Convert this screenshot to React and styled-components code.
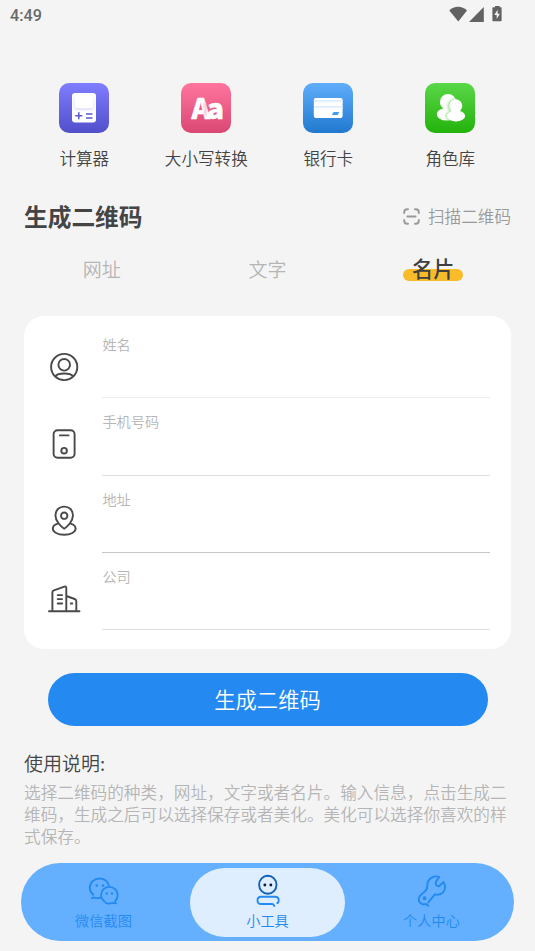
import React from "react";
import styled, { createGlobalStyle, css } from "styled-components";

const Global = createGlobalStyle`
  * { box-sizing: border-box; }
  body { margin: 0; background: #f4f4f4; font-family: "Noto Sans CJK SC", "Noto Sans", sans-serif; font-weight: 350; }
`;

const Screen = styled.main`
  width: 535px;
  height: 951px;
  overflow: hidden;
  background: #f4f4f4;
  color: #444;
  display: flex;
  flex-direction: column;
`;

const StatusBar = styled.header`
  height: 30px;
  flex: none;
  display: flex;
  justify-content: space-between;
  padding: 0 32px 0 10px;
  font: 500 16.2px/31px Roboto, sans-serif;
  color: #6a6a6a;
  svg { display: block; }
`;

const Tools = styled.nav`
  margin-top: 53px;
  padding-left: 23.3px;
  height: 94px;
  flex: none;
  display: grid;
  grid-template-columns: repeat(4, 122px);
`;

const Tool = styled.div`
  display: flex;
  flex-direction: column;
  align-items: center;
  gap: 13px;
  font-size: 16.6px;
  line-height: 24px;
  white-space: nowrap;
  svg { display: block; flex: none; }
`;

const TitleRow = styled.div`
  height: 40px;
  margin-top: 19px;
  padding: 0 24px;
  flex: none;
  display: flex;
  justify-content: space-between;
  align-items: center;
`;

const Title = styled.h1`
  margin: 0;
  font-size: 23.7px;
  line-height: 37px;
  font-weight: 700;
`;

const Scan = styled.div`
  display: flex;
  align-items: center;
  gap: 8px;
  font-size: 16.6px;
  line-height: 24px;
  color: #999;
`;

const Tabs = styled.div`
  height: 46px;
  margin-top: 10px;
  padding: 0 19px;
  flex: none;
  display: grid;
  grid-template-columns: repeat(3, 1fr);
`;

const Tab = styled.div`
  display: flex;
  justify-content: center;
  font-size: 19px;
  line-height: 45px;
  color: #b5b5b5;
  ${({ $active }) => $active && css`
    font-size: 21.2px;
    line-height: 44px;
    font-weight: 500;
    color: #3f3f3f;
  `}
`;

const Marked = styled.span`
  height: 46px;
  padding: 0 9px;
  position: relative;
  z-index: 0;
  &::before {
    content: "";
    position: absolute;
    z-index: -1;
    left: 0;
    right: 0;
    top: 23px;
    height: 12px;
    border-radius: 6px;
    background: #f8bc2b;
  }
`;

const Card = styled.section`
  margin: 24px 24px 0;
  height: 333px;
  flex: none;
  padding: 5px 21px 0 20px;
  border-radius: 20px;
  background: #fff;
`;

const Field = styled.label`
  height: 77.33px;
  display: grid;
  grid-template-columns: 40px 388px;
  column-gap: 18px;
  svg { margin-top: 25.6px; justify-self: center; }
`;

const Input = styled.div`
  height: 77.33px;
  padding: 13px 0 0 0.4px;
  border-bottom: 1px solid ${({ $line }) => $line};
  font-size: 14.2px;
  line-height: 21px;
  color: #b5b5b5;
`;

const Submit = styled.button`
  width: 440px;
  height: 53px;
  margin: 24px auto 0;
  flex: none;
  padding: 0 0 2px;
  border: 0;
  border-radius: 27px;
  background: #2489f0;
  color: #fff;
  font: 350 21.3px/51px "Noto Sans CJK SC", sans-serif;
`;

const Guide = styled.section`
  margin-top: 22px;
  padding: 0 24px;
  height: 97px;
  flex: none;
`;

const GuideTitle = styled.h2`
  margin: 0 0 4px;
  font-size: 19px;
  line-height: 29px;
  font-weight: inherit;
`;

const GuideText = styled.p`
  width: 490px;
  margin: 0;
  font-size: 16.65px;
  line-height: 22px;
  color: #b5b5b5;
  white-space: nowrap;
`;

const BottomBar = styled.nav`
  width: 493px;
  height: 78px;
  margin: 18px 0 0 21px;
  flex: none;
  padding: 5px 4px 4px 5px;
  border-radius: 39px;
  background: #64b0ff;
  display: grid;
  grid-template-columns: repeat(3, 155px);
  column-gap: 9px;
`;

const NavItem = styled.div`
  height: 69px;
  padding-top: 6px;
  border-radius: 35px;
  display: flex;
  flex-direction: column;
  align-items: center;
  background: ${({ $active }) => ($active ? "#deeeff" : "transparent")};
  color: #2489f0;
  font-size: 14.2px;
  line-height: 21px;
  svg { display: block; margin-bottom: 1px; }
`;

const StatusIcons = () => (
  <svg width="54" height="30" viewBox="0 0 54 30" fill="#626262">
    <path d="M0.3 10.4C5 5.5 13 5.5 18 10.4L9.3 21.5Z" />
    <path d="M34.8 7v15H20Z" />
    <path d="M46 6h4.6v1.3h1.2q.8 0 .8.8v12.3q0 .8-.8.8h-7.6q-.8 0-.8-.8V8.1q0-.8.8-.8H46Z" />
    <path d="M48.6 9.7 45.3 15h2.4v4l3.2-5.2h-2.3Z" fill="#f4f4f4" />
  </svg>
);

const tileColors = {
  calc: ["#807dff", "#514fca"],
  text: ["#ff759e", "#d94872"],
  bank: ["#60adfb", "#2179ce"],
  role: ["#5ad748", "#23b20b"],
};

const Tile = ({ kind, children }) => (
  <svg width="50" height="50" viewBox="0 0 50 50">
    <defs>
      <linearGradient id={kind} x2="0" y2="1">
        <stop stopColor={tileColors[kind][0]} />
        <stop offset="1" stopColor={tileColors[kind][1]} />
      </linearGradient>
      <filter id={`${kind}Soft`} x="-50%" y="-50%" width="200%" height="200%"><feGaussianBlur stdDeviation="1" /></filter>
    </defs>
    <rect width="50" height="50" rx="10" fill={`url(#${kind})`} />
    {children}
  </svg>
);

const CalcIcon = () => (
  <Tile kind="calc">
    <rect x="13" y="10" width="24" height="29.5" rx="3" fill="#fff" />
    <rect x="15.5" y="13.5" width="19" height="13.3" rx="2.5" fill="#aaa8f4" filter="url(#calcSoft)" opacity=".45" />
    <rect x="15.8" y="12" width="18.6" height="13.3" rx="2.5" fill="#fff" />
    <path d="M16.3 32.7h7M19.8 29.2v7M27 31h6.5M27 35h6.5" stroke="#5c59d4" strokeWidth="1.5" />
  </Tile>
);

const GlyphText = styled.text`
  font: 900 28px "Noto Sans CJK SC", sans-serif;
  letter-spacing: -3.2px;
  fill: #fff;
  stroke: #fff;
  stroke-width: 0.5px;
`;

const CaseIcon = () => (
  <Tile kind="text">
    <GlyphText x="10.4" y="35.6">Aa</GlyphText>
    <path d="m23.4 20 1.3 5.5-.6 7" fill="none" stroke="#f7a9c2" strokeWidth="1.8" filter="url(#textSoft)" />
  </Tile>
);

const BankIcon = () => (
  <Tile kind="bank">
    <defs><linearGradient id="stripe" x2="0" y2="1"><stop stopColor="#d3e8fd" /><stop offset="1" stopColor="#fff" /></linearGradient></defs>
    <rect x="10.8" y="15" width="28.8" height="20" rx="2" fill="#fff" />
    <rect x="11" y="17" width="28.5" height="3" fill="url(#stripe)" />
    <rect x="11" y="23" width="28.5" height="3" fill="url(#stripe)" />
    <path d="M31 29h5.3l-1.6 3H29q.5-2.5 2-3" fill="#469bea" />
  </Tile>
);

const RoleIcon = () => (
  <Tile kind="role">
    <defs>
      <clipPath id="backPerson">
        <circle cx="23" cy="19" r="8" />
        <path d="M17.5 23H29v12H15q5-5 2.5-12" />
        <ellipse cx="21.5" cy="31.3" rx="9.7" ry="6.3" />
      </clipPath>
    </defs>
    <g clipPath="url(#backPerson)">
      <rect x="10" y="10" width="26" height="30" fill="#fff" />
      <circle cx="30" cy="23" r="7.6" fill="#a9e4a0" filter="url(#roleSoft)" />
      <ellipse cx="30" cy="33" rx="9.4" ry="6.2" fill="#a9e4a0" filter="url(#roleSoft)" />
    </g>
    <circle cx="30.8" cy="22.8" r="6.5" fill="#fff" />
    <path d="M27.5 26h6.8v5h-7.2z" fill="#fff" />
    <ellipse cx="31" cy="32.9" rx="9.1" ry="5.6" fill="#fff" />
  </Tile>
);

const ScanIcon = () => (
  <svg width="17" height="17" viewBox="0 0 17 17" fill="none" stroke="#999" strokeWidth="1.9" strokeLinecap="round">
    <path d="M1.2 5v-.8q0-3 3-3H5M12 1.2h.8q3 0 3 3V5M15.8 12v.8q0 3-3 3H12M5 15.8h-.8q-3 0-3-3V12M4.4 8.5h8.2" />
  </svg>
);

const LineIcon = ({ children }) => (
  <svg width="40" height="40" viewBox="0 0 40 40" fill="none" stroke="#494949" strokeWidth="1.9" strokeLinecap="round" strokeLinejoin="round">{children}</svg>
);

const fields = [
  ["姓名", "#eee", <><circle cx="20.2" cy="20" r="13.1" /><circle cx="20.2" cy="17.8" r="5.8" /><path d="M11.7 29q1.5-2.5 8.5-2.5t8.5 2.5" /></>],
  ["手机号码", "#ddd", <><rect x="9.6" y="6.3" width="21" height="27.4" rx="4" /><path d="M15.9 11.4h8.6" /><circle cx="20.1" cy="26.7" r="2.8" /></>],
  ["地址", "#c6c6c6", <g transform="translate(.2 -.5)"><path d="M20 28.2c-3-1.8-8.8-7.5-8.8-13.4C11.2 9.5 15 6.1 20 6.1s8.8 3.4 8.8 8.7c0 5.9-5.8 11.6-8.8 13.4Z" /><circle cx="20" cy="15.2" r="3.2" /><path d="M13.6 23.1c-3 .8-5 2.6-5 5 0 3.5 4.8 6.1 11.4 6.1s11.4-2.6 11.4-6.1c0-2.4-2-4.2-5-5" /></g>],
  ["公司", "#ddd", <g transform="translate(.2 -.7)"><path d="M4.8 33h30.5M8.2 33V14q0-1.5 1.5-2l10.4-3.6q2-.7 2 1.3V33M22.1 17.7l8.4 3q1.6.6 1.6 2.2V33M13.5 16.8h4.4M13.5 20.8h4.4M13.5 25.2h4.4M26.6 25.2h1.5" /></g>],
];

const NavIcon = ({ children }) => (
  <svg width="36" height="35" viewBox="0 0 36 35" fill="none" stroke="#2489f0" strokeWidth="1.9" strokeLinecap="round" strokeLinejoin="round">{children}</svg>
);

export default function App() {
  return (
    <>
      <Global />
      <Screen>
        <StatusBar><span>4:49</span><StatusIcons /></StatusBar>
        <Tools>
          <Tool><CalcIcon />计算器</Tool>
          <Tool><CaseIcon />大小写转换</Tool>
          <Tool><BankIcon />银行卡</Tool>
          <Tool><RoleIcon />角色库</Tool>
        </Tools>
        <TitleRow><Title>生成二维码</Title><Scan><ScanIcon />扫描二维码</Scan></TitleRow>
        <Tabs><Tab>网址</Tab><Tab>文字</Tab><Tab $active><Marked>名片</Marked></Tab></Tabs>
        <Card>
          {fields.map(([label, line, icon]) => (
            <Field key={label}><LineIcon>{icon}</LineIcon><Input $line={line}>{label}</Input></Field>
          ))}
        </Card>
        <Submit>生成二维码</Submit>
        <Guide>
          <GuideTitle>使用说明:</GuideTitle>
          <GuideText>选择二维码的种类，网址，文字或者名片。输入信息，点击生成二<br />维码，生成之后可以选择保存或者美化。美化可以选择你喜欢的样<br />式保存。</GuideText>
        </Guide>
        <BottomBar>
          <NavItem>
            <NavIcon>
              <path d="M7.3 20.8Q3.8 17.7 3.8 13.7C3.8 8.3 8.2 4.5 13.5 4.5c4.8 0 8.7 3 9.5 7.4M14.4 23.6q-3.2.9-5.2.2-1.6-.7-3.2.4" />
              <path d="M18.6 27.4q-3.5-2.2-3.5-6.3c0-5 3.8-8.2 8.3-8.2s8.3 3.5 8.3 8.2q0 3.6-2.7 6.2M19.8 28.9q1.8 1 4.5.5 1.8-.8 3.1-.4 1.3.6 2.7.2" />
              <path d="M10.7 11.4h.1M17 11.4h.1M20.8 19.4h.1M26 19.4h.1" strokeWidth="2.5" />
            </NavIcon>微信截图
          </NavItem>
          <NavItem $active>
            <NavIcon>
              <ellipse cx="17.8" cy="10.8" rx="8.7" ry="9" stroke="#1260b8" />
              <path d="M14.8 11h.1M20.8 11h.1" stroke="#101c40" strokeWidth="2.8" />
              <path d="M24.3 32q-.7-2-2-2H11q-3.5 0-3.5-3.6T11 22.8h14.2q3.5 0 3.5 3.6 0 2-1.4 2.7" />
            </NavIcon>小工具
          </NavItem>
          <NavItem>
            <NavIcon>
              <path d="M15.3 28.3 21.8 20.3q5 1.4 8.3-2c2.5-2.7 2.5-7.4.3-10.2L26 12.3q-3.8-.1-3.2-4.2L26.2 3C20 .8 14 5.2 14.3 12q.1 2.6-1.6 4.6L7 21.8q-3.7 5.4 2.6 8.5h4.4l1.3 1.5" transform="translate(-1 0)" />
              <circle cx="10.6" cy="24.3" r="1" fill="#2489f0" />
            </NavIcon>个人中心
          </NavItem>
        </BottomBar>
      </Screen>
    </>
  );
}
